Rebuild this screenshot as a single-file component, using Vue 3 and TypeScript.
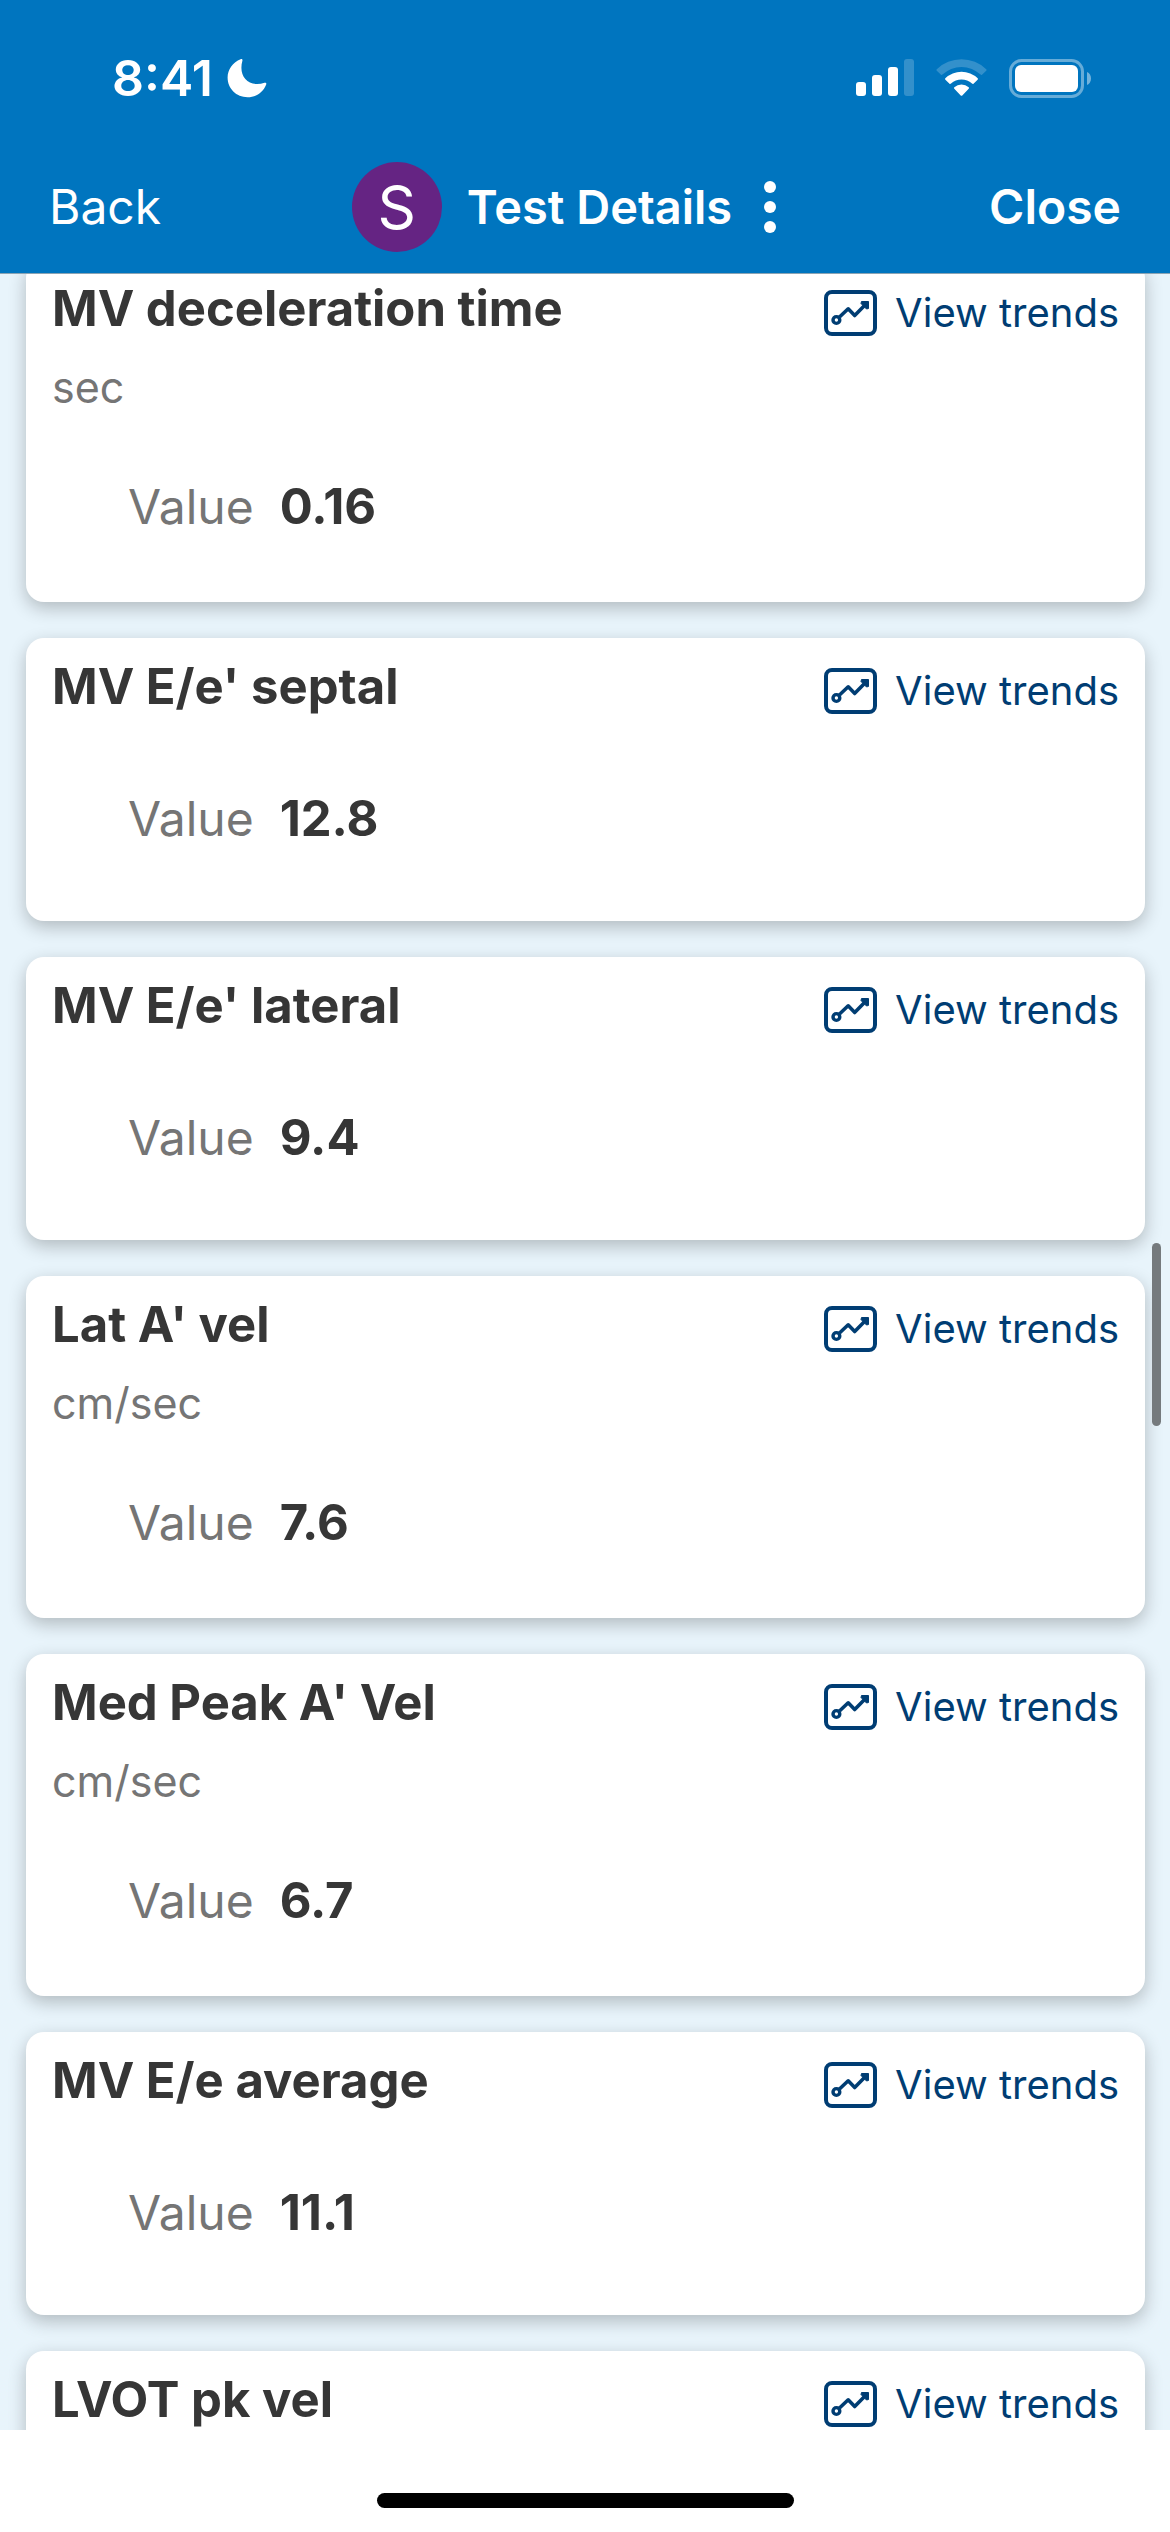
<script setup lang="ts">
interface TestResult {
  name: string
  unit?: string
  value?: string
}

const results: TestResult[] = [
  { name: 'MV deceleration time', unit: 'sec', value: '0.16' },
  { name: "MV E/e' septal", value: '12.8' },
  { name: "MV E/e' lateral", value: '9.4' },
  { name: "Lat A' vel", unit: 'cm/sec', value: '7.6' },
  { name: "Med Peak A' Vel", unit: 'cm/sec', value: '6.7' },
  { name: 'MV E/e average', value: '11.1' },
  { name: 'LVOT pk vel' },
]
</script>

<template>
  <div class="screen">
    <header class="top">
      <div class="status">
        <div class="clock">
          <span>8:41</span>
          <svg class="moon" width="40" height="40" viewBox="0 0 40 40" aria-hidden="true">
            <path d="M13.6 1.2C14.800 0.700 15.800 1.300 15.400 2.800C14.700 5.200 14.400 7.500 14.400 9.800C14.400 19.200 20.600 26 30.200 26C32.800 26 35.200 25.600 37.400 24.800C38.900 24.300 39.700 25.100 39.200 26.500C36.300 34.100 29.200 39.300 20.600 39.300C9.300 39.300 0.600 30.700 0.600 19.600C0.600 11.200 5.900 4.100 13.600 1.200Z" fill="#fff" />
          </svg>
        </div>
        <div class="indicators">
          <svg width="58" height="38" viewBox="0 0 58 38" aria-hidden="true">
            <g fill="#fff">
              <rect x="0" y="23" width="10" height="14" rx="3" />
              <rect x="16" y="16" width="10" height="21" rx="3" />
              <rect x="32" y="8" width="10" height="29" rx="3" />
              <rect x="48" y="0" width="10" height="37" rx="3" opacity="0.2" />
            </g>
          </svg>
          <svg width="51" height="38" viewBox="0 0 51 38" aria-hidden="true">
            <path d="M0.800 10.200A35.500 35.500 0 0 1 50.200 10.200Q50.900 10.900 50.200 11.700L46 15.700Q45.300 16.200 44.600 15.600A27.500 27.500 0 0 0 6.400 15.600Q5.700 16.200 5 15.700L0.800 11.700Q0.100 10.900 0.800 10.200Z" fill="#fff" opacity="0.2" />
            <path d="M9.300 19.200A23.500 23.500 0 0 1 41.700 19.200Q42.300 19.900 41.600 20.700L37.500 24.700Q36.800 25.300 36 24.600A15.500 15.500 0 0 0 15 24.600Q14.200 25.300 13.500 24.700L9.400 20.700Q8.700 19.900 9.300 19.200Z" fill="#fff" />
            <path d="M18.300 28.300A11 11 0 0 1 32.700 28.300Q33.400 29.100 32.700 29.800L26.300 36.400Q25.500 37.200 24.700 36.400L18.300 29.800Q17.600 29.100 18.300 28.300Z" fill="#fff" />
          </svg>
          <svg width="83" height="39" viewBox="0 0 83 39" aria-hidden="true">
            <rect x="1.500" y="1.500" width="72" height="36" rx="11" fill="none" stroke="#fff" stroke-width="3" opacity="0.400" />
            <rect x="6" y="6" width="63" height="27" rx="6" fill="#fff" />
            <path d="M78 13C80.600 14.200 82 16.600 82 19.500S80.600 24.800 78 26Z" fill="#fff" opacity="0.450" />
          </svg>
        </div>
      </div>
      <nav class="bar">
        <button type="button" class="nav-btn back">Back</button>
        <div class="heading">
          <span class="avatar">S</span>
          <h1>Test Details</h1>
          <button type="button" class="more" aria-label="More options">
            <svg width="12" height="52" viewBox="0 0 12 52" fill="#fff" aria-hidden="true">
              <circle cx="6" cy="6" r="6" />
              <circle cx="6" cy="26" r="6" />
              <circle cx="6" cy="46" r="6" />
            </svg>
          </button>
        </div>
        <button type="button" class="nav-btn close">Close</button>
      </nav>
    </header>

    <main class="content">
      <div class="list">
        <article
          v-for="result in results"
          :key="result.name"
          class="card"
          :class="{ 'has-unit': result.unit }"
        >
          <div class="card-head">
            <h2>{{ result.name }}</h2>
            <a href="#" class="trends">
              <svg width="53" height="46" viewBox="0 0 53 46" fill="none" stroke="#003d73" aria-hidden="true">
                <rect x="2" y="2" width="49" height="42" rx="6" stroke-width="4" />
                <circle cx="12.400" cy="30" r="3.400" stroke-width="3.400" />
                <path d="M15.500 27L24.200 18.800L30.700 25.500L42 14" stroke-width="3.600" stroke-linejoin="round" />
                <path d="M37.500 11.500H44.500V18.500L42.500 19L37 13.500Z" fill="#003d73" stroke-width="1" stroke-linejoin="round" />
              </svg>
              <span>View trends</span>
            </a>
          </div>
          <p v-if="result.unit" class="unit">{{ result.unit }}</p>
          <dl v-if="result.value" class="reading">
            <dt>Value</dt>
            <dd>{{ result.value }}</dd>
          </dl>
        </article>
      </div>
      <div class="scroll-thumb"></div>
    </main>

    <footer class="home"><span class="home-bar"></span></footer>
  </div>
</template>

<style>
body {
  margin: 0;
}
</style>

<style scoped>
.screen {
  display: flex;
  flex-direction: column;
  height: 100vh;
  overflow: hidden;
  background: #fff;
  font-family: Inter, "Liberation Sans", sans-serif;
  color: #363636;
}

.top {
  flex: none;
  background: #0075bf;
  border-bottom: 1px solid #8ba4b4;
  color: #fff;
}

.status {
  display: flex;
  justify-content: space-between;
  align-items: center;
  padding: 48px 78px 0 112px;
  height: 60px;
}

.clock {
  display: flex;
  align-items: center;
  gap: 14px;
  font-size: 50px;
  font-weight: 600;
  line-height: 60px;
}

.indicators {
  display: flex;
  align-items: center;
  gap: 22px;
}

.bar {
  display: grid;
  grid-template-columns: 1fr auto 1fr;
  align-items: center;
  padding: 54px 49px 21px;
}

button {
  border: 0;
  padding: 0;
  background: none;
  color: inherit;
  font: inherit;
}

.nav-btn {
  font-size: 48px;
  line-height: 60px;
}

.back {
  justify-self: start;
}

.close {
  justify-self: end;
  font-weight: 600;
}

.heading {
  display: flex;
  align-items: center;
  padding-right: 10px;
}

.avatar {
  width: 90px;
  height: 90px;
  border-radius: 50%;
  background: #652483;
  font-size: 60px;
  line-height: 90px;
  text-align: center;
}

h1 {
  margin: 0 0 0 25px;
  font-size: 47px;
  font-weight: 600;
  line-height: 60px;
}

.more {
  display: flex;
  justify-content: center;
  width: 76px;
}

.content {
  position: relative;
  flex: 1;
  min-height: 0;
  overflow: hidden;
  background: #e8f4fb;
}

.list {
  display: flex;
  flex-direction: column;
  gap: 36px;
  margin: -14px 25px 0 26px;
}

.card {
  box-sizing: border-box;
  min-height: 283px;
  padding: 19px 26px 0;
  border-radius: 18px;
  background: #fff;
  box-shadow: 0 6px 18px rgba(0, 0, 0, 0.24);
}

.card-head {
  display: flex;
  justify-content: space-between;
}

h2 {
  margin: 0;
  font-size: 49px;
  font-weight: 700;
  line-height: 60px;
}

.trends {
  display: flex;
  align-items: center;
  gap: 18px;
  padding-top: 8px;
  color: #003d73;
  font-size: 40px;
  line-height: 52px;
  text-decoration: none;
}

.unit {
  margin: 22px 0 0;
  color: #757575;
  font-size: 43px;
  line-height: 52px;
}

.reading {
  display: flex;
  gap: 26px;
  margin: 0;
  padding: 72px 76px;
  font-size: 48px;
  line-height: 60px;
}

.has-unit .reading {
  padding-top: 64px;
  padding-bottom: 65px;
}

dt {
  color: #757575;
}

dd {
  margin: 0;
  font-size: 49px;
  font-weight: 700;
}

.scroll-thumb {
  position: absolute;
  top: 969px;
  right: 9px;
  width: 9px;
  height: 183px;
  border-radius: 5px;
  background: #757a7d;
}

.home {
  flex: none;
  display: flex;
  justify-content: center;
  align-items: flex-end;
  height: 78px;
  padding-bottom: 24px;
}

.home-bar {
  width: 417px;
  height: 15px;
  border-radius: 8px;
  background: #000;
}
</style>
